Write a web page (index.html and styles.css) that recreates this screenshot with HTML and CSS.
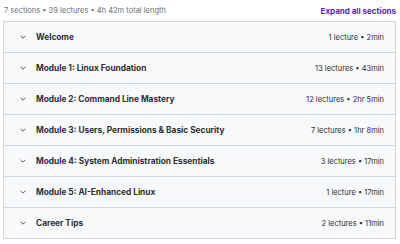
FILE: index.html
```html
<!DOCTYPE html>
<html lang="en">
<head>
  <meta charset="UTF-8" />
  <title>Course content</title>
  <link rel="stylesheet" href="styles.css">
</head>
<body>
  <div class="summary">
    <span>7 sections • 39 lectures • 4h 42m total length</span>
    <a class="expand" href="#">Expand all sections</a>
  </div>

  <div class="sections">
    <div class="section">
      <span class="chev"><svg viewBox="0 0 10 10" width="8" height="8"><path d="M2 3.5 L5 6.5 L8 3.5" fill="none" stroke="#2d2f31" stroke-width="1"/></svg></span>
      <span class="title">Welcome</span>
      <span class="meta">1 lecture • 2min</span>
    </div>
    <div class="section">
      <span class="chev"><svg viewBox="0 0 10 10" width="8" height="8"><path d="M2 3.5 L5 6.5 L8 3.5" fill="none" stroke="#2d2f31" stroke-width="1"/></svg></span>
      <span class="title">Module 1: Linux Foundation</span>
      <span class="meta">13 lectures • 43min</span>
    </div>
    <div class="section">
      <span class="chev"><svg viewBox="0 0 10 10" width="8" height="8"><path d="M2 3.5 L5 6.5 L8 3.5" fill="none" stroke="#2d2f31" stroke-width="1"/></svg></span>
      <span class="title">Module 2: Command Line Mastery</span>
      <span class="meta">12 lectures • 2hr 5min</span>
    </div>
    <div class="section">
      <span class="chev"><svg viewBox="0 0 10 10" width="8" height="8"><path d="M2 3.5 L5 6.5 L8 3.5" fill="none" stroke="#2d2f31" stroke-width="1"/></svg></span>
      <span class="title">Module 3: Users, Permissions &amp; Basic Security</span>
      <span class="meta">7 lectures • 1hr 8min</span>
    </div>
    <div class="section">
      <span class="chev"><svg viewBox="0 0 10 10" width="8" height="8"><path d="M2 3.5 L5 6.5 L8 3.5" fill="none" stroke="#2d2f31" stroke-width="1"/></svg></span>
      <span class="title">Module 4: System Administration Essentials</span>
      <span class="meta">3 lectures • 17min</span>
    </div>
    <div class="section">
      <span class="chev"><svg viewBox="0 0 10 10" width="8" height="8"><path d="M2 3.5 L5 6.5 L8 3.5" fill="none" stroke="#2d2f31" stroke-width="1"/></svg></span>
      <span class="title">Module 5: AI-Enhanced Linux</span>
      <span class="meta">1 lecture • 17min</span>
    </div>
    <div class="section">
      <span class="chev"><svg viewBox="0 0 10 10" width="8" height="8"><path d="M2 3.5 L5 6.5 L8 3.5" fill="none" stroke="#2d2f31" stroke-width="1"/></svg></span>
      <span class="title">Career Tips</span>
      <span class="meta">2 lectures • 11min</span>
    </div>
  </div>
</body>
</html>
```

FILE: styles.css
```css
body {
  font-family: Inter, "Liberation Sans", sans-serif;
  background: #fff;
  color: #2d2f31;
  margin: 0;
  padding: 0 4px 0 3px;
}
.summary {
  display: flex;
  justify-content: space-between;
  align-items: center;
  height: 21px;
  font-size: 7.5px;
  color: #6a6f73;
  padding-left: 1px;
}
.expand {
  color: #5624d0;
  font-weight: 700;
  text-decoration: none;
  font-size: 8px;
}
.sections {
  border: 1px solid #d1d7dc;
  border-bottom: none;
}
.section {
  display: flex;
  align-items: center;
  height: 30px;
  background: #f7f9fa;
  border-bottom: 1px solid #d1d7dc;
  padding: 0 11px 0 15px;
}
.chev {
  display: flex;
  width: 17px;
}
.title {
  flex: 1;
  font-size: 8.3px;
  font-weight: 700;
}
.meta {
  font-size: 7.5px;
  color: #2d2f31;
}
```
